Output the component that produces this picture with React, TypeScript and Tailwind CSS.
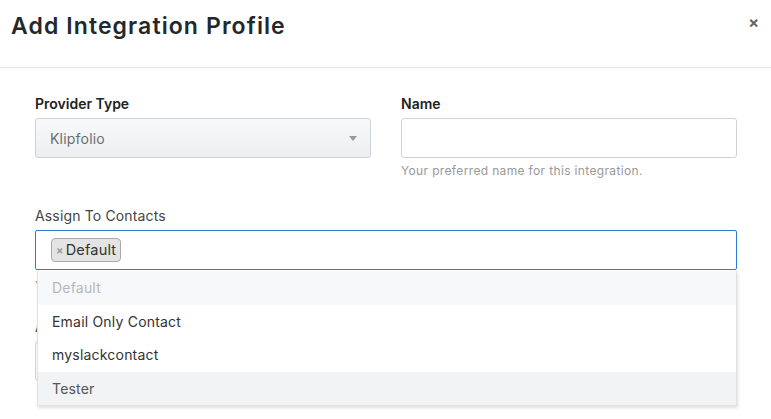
import React from "react";

const options = [
  { label: "Default", disabled: true },
  { label: "Email Only Contact" },
  { label: "myslackcontact" },
  { label: "Tester", active: true },
];

export default function App() {
  return (
    <div
      className="w-[771px] h-[419px] overflow-hidden bg-white text-[#333]"
      style={{ fontFamily: "Inter, 'Noto Sans', sans-serif" }}
    >
      {/* header */}
      <div className="flex items-start justify-between h-[68px] border-b border-[#e3e5e8] pl-[11px] pr-[12px]">
        <h1 className="mt-[12px] text-[23px] leading-[28px] font-semibold text-[#23282c] tracking-[1.1px]">
          Add Integration Profile
        </h1>
        <button className="mt-[14px] text-[#666] text-[16px] leading-[16px] font-bold">
          ×
        </button>
      </div>

      {/* body */}
      <div className="pl-[35px] pr-[34px] pt-[27px]">
        <div className="grid grid-cols-2 gap-x-[30px]">
          <div>
            <label className="block text-[14px] leading-[18px] font-semibold text-[#222] mb-[5px]">
              Provider Type
            </label>
            <div className="flex items-center justify-between h-[40px] rounded-[3px] border border-[#cfd3d7] bg-gradient-to-b from-[#f8f9fa] to-[#eceef0] pl-[14px] pr-[13px]">
              <span className="text-[14px] text-[#6b6f73] tracking-[0.2px]">Klipfolio</span>
              <span className="w-0 h-0 border-l-[4px] border-r-[4px] border-t-[5px] border-l-transparent border-r-transparent border-t-[#999]" />
            </div>
          </div>
          <div>
            <label className="block text-[14px] leading-[18px] font-semibold text-[#222] mb-[5px]">
              Name
            </label>
            <input className="block w-full h-[40px] rounded-[3px] border border-[#cfd3d7] bg-white outline-none" />
            <p className="mt-[5px] text-[12px] leading-[16px] text-[#999] tracking-[0.35px]">
              Your preferred name for this integration.
            </p>
          </div>
        </div>

        <div className="relative mt-[28px]">
          <label className="block text-[14px] leading-[18px] text-[#444] tracking-[0.15px] mb-[5px]">
            Assign To Contacts
          </label>
          <div className="flex items-center h-[40px] rounded-[2px] border border-[#2f7bd9] bg-white pl-[15px]">
            <span className="flex items-center h-[24px] rounded-[4px] border border-[#aaa] bg-[#e4e4e4] pl-[4px] pr-[4px] text-[14.5px] text-[#333] tracking-[0.2px]">
              <span className="text-[#999] text-[11px] font-bold mr-[2px]">×</span>
              Default
            </span>
          </div>

          {/* content hidden under the dropdown */}
          <p className="mt-[8px] text-[12px] leading-[16px] text-[#999]">Y</p>
          <label className="block mt-[24px] text-[14px] leading-[18px] text-[#444]">
            A
          </label>
          <div className="mt-[5px] h-[40px] rounded-[3px] border border-[#cfd3d7]" />

          {/* dropdown */}
          <ul className="absolute left-[2px] right-0 top-[64px] bg-white border border-[#e0e2e5] border-t-0 shadow-[1px_2px_3px_rgba(0,0,0,0.12)]">
            {options.map((o) => (
              <li
                key={o.label}
                className={`h-[33.5px] flex items-center pl-[14px] text-[14px] tracking-[0.2px] ${
                  o.disabled
                    ? "bg-[#f7f8f9] text-[#b5b9bd]"
                    : o.active
                    ? "bg-[#f2f3f5] text-[#555]"
                    : "text-[#333]"
                }`}
              >
                {o.label}
              </li>
            ))}
          </ul>
        </div>
      </div>
    </div>
  );
}
